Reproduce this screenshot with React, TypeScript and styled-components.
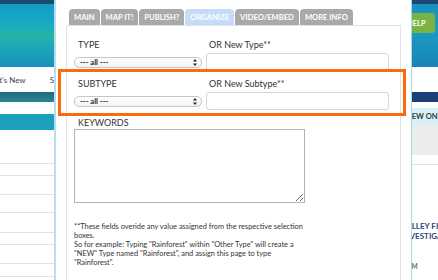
import React from "react";
import styled, { createGlobalStyle } from "styled-components";

const GlobalStyle = createGlobalStyle`
  html, body {
    margin: 0;
    padding: 0;
    overflow: hidden;
    background: #fff;
  }
  body {
    font-family: Lato, "Open Sans", Arial, sans-serif;
  }
`;

const Page = styled.div`
  display: flex;
  width: 438px;
  height: 280px;
  overflow: hidden;
`;

/* ---------- background page, seen at the sides ---------- */

const SideColumn = styled.div<{ $width: number; $side: "left" | "right" }>`
  flex: none;
  width: ${(p) => p.$width}px;
  display: flex;
  flex-direction: column;
  overflow: hidden;
  ${(p) =>
    p.$side === "left"
      ? "border-right: 2px solid #b3e0ea;"
      : "border-left: 1px solid #a9dbe6;"}
`;

const TopStrip = styled.div`
  height: 4px;
  flex: none;
  background: #1a4a72;
`;

const Header = styled.div<{ $blue?: boolean }>`
  height: 63px;
  flex: none;
  background: ${(p) =>
    p.$blue
      ? "linear-gradient(180deg, #1a8ec0 0%, #1b9cc4 40%, #1784b4 100%)"
      : "linear-gradient(180deg, #1499c6 0%, #18aac4 30%, #27b2a6 50%, #1fa8b8 68%, #1790bc 100%)"};
`;

const NavRow = styled.div`
  height: 25px;
  flex: none;
  display: flex;
  justify-content: flex-end;
  align-items: center;
  gap: 24px;
  white-space: nowrap;
  font-size: 8px;
  color: #444;
`;

const Band = styled.div<{ $h: number; $bg: string }>`
  height: ${(p) => p.$h}px;
  flex: none;
  background: ${(p) => p.$bg};
`;

const ListRow = styled.div<{ $h: number }>`
  height: ${(p) => p.$h}px;
  flex: none;
  box-sizing: border-box;
  border-bottom: 1px solid #e1e1e1;
`;

const HelpButton = styled.div`
  margin: 9px 0 0 -9px;
  width: 32px;
  height: 20px;
  box-sizing: border-box;
  padding-left: 4px;
  display: flex;
  align-items: center;
  background: #79b443;
  border-radius: 3px;
  color: #fff;
  font-size: 7.5px;
  font-weight: 700;
`;

const CyanBand = styled.div`
  height: 17px;
  flex: none;
  display: flex;
  align-items: center;
  background: #d6f2f8;
  white-space: nowrap;
  font-size: 7.5px;
  font-weight: 700;
  color: #3a3a3a;
  span {
    margin-left: -6px;
  }
`;

const Headline = styled.div`
  margin: 56px 0 0 -11px;
  white-space: nowrap;
  font-size: 8px;
  line-height: 10px;
  font-weight: 700;
  color: #2b4a7c;
`;

const Meta = styled.div`
  margin: 22px 0 0 -5px;
  white-space: nowrap;
  font-size: 6.5px;
  font-weight: 700;
  color: #666;
`;

/* ---------- modal ---------- */

const Modal = styled.div`
  position: relative;
  flex: 1;
  background: #fff;
  padding: 9px 0 0 10px;
`;

const Tabs = styled.div`
  display: flex;
  gap: 1px;
  margin-left: 3px;
  height: 16px;
`;

const Tab = styled.div<{ $active?: boolean }>`
  display: flex;
  align-items: center;
  padding: 0 5px;
  border-radius: 4px 4px 0 0;
  background: ${(p) => (p.$active ? "#c4dcf8" : "#a9a9a9")};
  color: #fff;
  font-size: 7.6px;
  font-weight: 700;
  white-space: nowrap;
`;

const Panel = styled.div`
  width: 335px;
  height: 260px;
  box-sizing: border-box;
  border: 1px solid #e3e3e3;
  border-bottom: none;
  padding: 13px 0 0 7px;
`;

const FieldRow = styled.div`
  display: grid;
  grid-template-columns: 128px 183px;
  column-gap: 4px;
  row-gap: 3px;
  margin-bottom: 7px;
`;

const Label = styled.div<{ $indent: number }>`
  padding-left: ${(p) => p.$indent}px;
  font-size: 9px;
  line-height: 11px;
  color: #333;
`;

const Cell = styled.div`
  height: 18px;
  display: flex;
  align-items: center;
`;

const SelectBox = styled.div`
  width: 128px;
  height: 11px;
  box-sizing: border-box;
  display: flex;
  align-items: center;
  justify-content: space-between;
  padding: 0 4px 0 5px;
  border: 1px solid #c6c6c6;
  border-radius: 5px;
  background: linear-gradient(#ffffff, #f2f2f2);
  font-size: 7.6px;
  font-weight: 700;
  color: #222;
  white-space: nowrap;
`;

const TextInput = styled.input`
  width: 183px;
  height: 18px;
  box-sizing: border-box;
  margin: 0;
  border: 1px solid #d6d6d6;
  border-radius: 3px;
  background: #fff;
  outline: none;
`;

const Keywords = styled.textarea`
  display: block;
  width: 231px;
  height: 74px;
  box-sizing: border-box;
  margin: 1px 0 0;
  border: 1px solid #b3b3b3;
  background: #fff;
  outline: none;
`;

const Note = styled.p`
  margin: 19px 0 0;
  font-size: 7.4px;
  line-height: 9px;
  color: #333;
  white-space: nowrap;
`;

const Highlight = styled.div`
  position: absolute;
  left: 2px;
  top: 69px;
  width: 348px;
  height: 47px;
  box-sizing: border-box;
  border: 3px solid #fd6a0c;
  pointer-events: none;
`;

const tabs = ["MAIN", "MAP IT!", "PUBLISH?", "ORGANIZE", "VIDEO/EMBED", "MORE INFO"];
const listRows = [34, 12, 19, 18, 20, 12, 19, 13, 20];
const noteLines = [
  "**These fields overide any value assigned from the respective selection",
  "boxes.",
  'So for example: Typing "Rainforest" within "Other Type" will create a',
  '"NEW" Type named "Rainforest", and assign this page to type',
  '"Rainforest".',
];

function AllSelect() {
  return (
    <SelectBox role="combobox">
      <span>--- all ---</span>
      <svg width="4" height="7" viewBox="0 0 4 7">
        <path d="M2 0 L4 2.6 L0 2.6 Z M2 7 L4 4.4 L0 4.4 Z" fill="#222" />
      </svg>
    </SelectBox>
  );
}

function Field({ label, newLabel }: { label: string; newLabel: string }) {
  return (
    <FieldRow>
      <Label $indent={4}>{label}</Label>
      <Label $indent={3}>{newLabel}</Label>
      <Cell>
        <AllSelect />
      </Cell>
      <Cell>
        <TextInput type="text" />
      </Cell>
    </FieldRow>
  );
}

export default function App() {
  return (
    <Page>
      <GlobalStyle />
      <SideColumn $width={54} $side="left">
        <TopStrip />
        <Header />
        <NavRow>
          <span>What's New</span>
          <span>S</span>
        </NavRow>
        <Band $h={10} $bg="linear-gradient(180deg, #1f6b7c, #2a8496)" />
        <Band $h={12} $bg="#fff" />
        <Band $h={16} $bg="#1e9fbb" />
        {listRows.map((h, i) => (
          <ListRow key={i} $h={h} />
        ))}
      </SideColumn>

      <Modal>
        <Tabs>
          {tabs.map((t) => (
            <Tab key={t} $active={t === "ORGANIZE"}>
              {t}
            </Tab>
          ))}
        </Tabs>
        <Panel>
          <Field label="TYPE" newLabel="OR New Type**" />
          <Field label="SUBTYPE" newLabel="OR New Subtype**" />
          <Label $indent={4}>KEYWORDS</Label>
          <Keywords />
          <Note>
            {noteLines.map((line, i) => (
              <React.Fragment key={i}>
                {line}
                {i < noteLines.length - 1 && <br />}
              </React.Fragment>
            ))}
          </Note>
        </Panel>
        <Highlight />
      </Modal>

      <SideColumn $width={26} $side="right">
        <TopStrip />
        <Header $blue>
          <HelpButton>HELP</HelpButton>
        </Header>
        <Band $h={25} $bg="#fff" />
        <Band $h={10} $bg="#1c3f78" />
        <Band $h={6} $bg="#fff" />
        <CyanBand>
          <span>NEW ONLINE</span>
        </CyanBand>
        <Band $h={30} $bg="#ececec" />
        <ListRow $h={10} />
        <Headline>
          VALLEY FIRE
          <br />
          INVESTIGATION
        </Headline>
        <Meta>AM</Meta>
      </SideColumn>
    </Page>
  );
}
